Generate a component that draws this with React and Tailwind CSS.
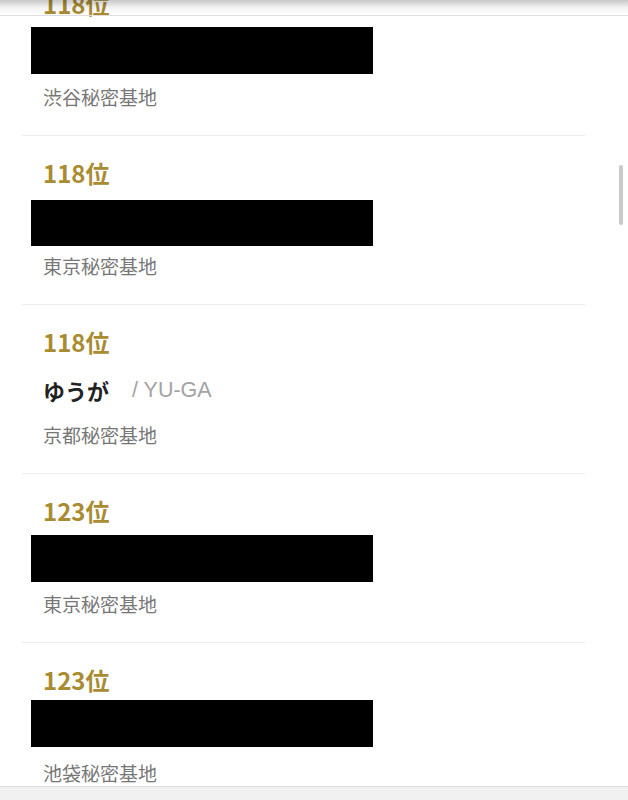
const ranks = [
  { rank: '118位', place: '渋谷秘密基地', box: 'mt-[9px] mb-[9px] h-[47px]' },
  { rank: '118位', place: '東京秘密基地', box: 'mt-[13px] mb-[6px] h-[46px]' },
  { rank: '118位', place: '京都秘密基地', name: 'ゆうが', romaji: 'YU-GA' },
  { rank: '123位', place: '東京秘密基地', box: 'mt-[10px] mb-[8px] h-[47px]' },
  { rank: '123位', place: '池袋秘密基地', box: 'mt-[6px] mb-[12px] h-[47px]' },
]

function RankItem({ item }) {
  return (
    <li className="border-b border-[#ececec] pl-[21px] pt-[23px] pb-[24px]">
      <p className="text-[24px] leading-[28px] font-bold text-[#a98b32]">{item.rank}</p>
      {item.name ? (
        <div className="mt-[13px] mb-[6px] flex h-[46px] items-center pb-[3px]">
          <span className="text-[22px] font-bold text-[#222]">{item.name}</span>
          <span className="ml-[23px] font-['Liberation_Sans',sans-serif] text-[21.5px] text-[#a3a3a3]">/ {item.romaji}</span>
        </div>
      ) : (
        // redacted name
        <div className={`-ml-[12px] w-[342px] bg-black ${item.box}`}></div>
      )}
      <p className="text-[19px] leading-[28px] text-[#777]">{item.place}</p>
    </li>
  )
}

export default function App() {
  return (
    <div
      className="relative h-[800px] w-[628px] overflow-hidden bg-white"
      style={{ fontFamily: '"Noto Sans CJK JP", "Noto Sans", sans-serif' }}
    >
      <ul className="-mt-[33px] ml-[22px] w-[563px]">
        {ranks.map((item, i) => (
          <RankItem key={i} item={item} />
        ))}
      </ul>

      {/* header shadow */}
      <div className="absolute left-0 right-0 top-0 h-[16px] border-b border-[#dedede] bg-gradient-to-b from-[rgba(0,0,0,0.22)] via-[rgba(0,0,0,0.05)] to-transparent"></div>

      {/* scrollbar */}
      <div className="absolute left-[619px] top-[165px] h-[60px] w-[4px] rounded-full bg-[#c9c9c9]"></div>

      {/* bottom bar */}
      <div className="absolute bottom-0 left-0 right-0 h-[14px] border-t border-[#dcdcdc] bg-[#f1f1f1]"></div>
    </div>
  )
}
